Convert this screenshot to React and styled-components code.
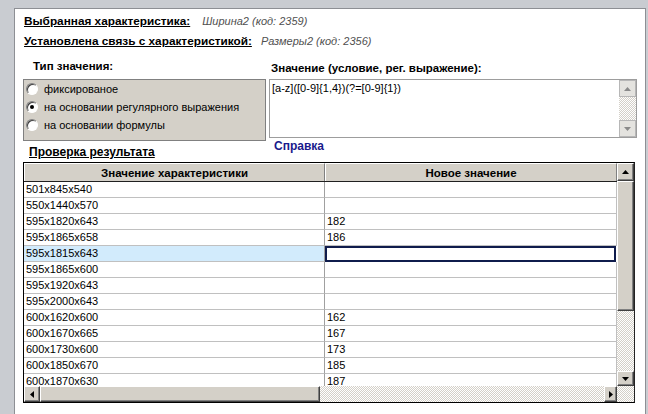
import React from "react";
import styled, { createGlobalStyle } from "styled-components";

const GlobalStyle = createGlobalStyle`
  html, body {
    margin: 0;
    padding: 0;
    background: #c9ccd1;
    overflow: hidden;
  }
  body {
    font-family: "Liberation Sans", Arial, sans-serif;
    font-size: 11px;
    color: #000;
  }
`;

const rows = [
  ["501x845x540", ""],
  ["550x1440x570", ""],
  ["595x1820x643", "182"],
  ["595x1865x658", "186"],
  ["595x1815x643", "", true],
  ["595x1865x600", ""],
  ["595x1920x643", ""],
  ["595x2000x643", ""],
  ["600x1620x600", "162"],
  ["600x1670x665", "167"],
  ["600x1730x600", "173"],
  ["600x1850x670", "185"],
  ["600x1870x630", "187"],
];

const App = () => {
  return (
    <Page>
      <GlobalStyle />
      <Panel>
        <InfoLine>
          <Caption $gap={12}>Выбранная характеристика:</Caption>
          <Muted>Ширина2 (код: 2359)</Muted>
        </InfoLine>
        <InfoLine>
          <Caption $gap={9}>Установлена связь с характеристикой:</Caption>
          <Muted>Размеры2 (код: 2356)</Muted>
        </InfoLine>

        <Columns>
          <LeftCol>
            <GroupTitle>Тип значения:</GroupTitle>
            <RadioBox>
              <RadioRow>
                <Radio />
                фиксированое
              </RadioRow>
              <RadioRow>
                <Radio $checked />
                на основании регулярного выражения
              </RadioRow>
              <RadioRow>
                <Radio />
                на основании формулы
              </RadioRow>
            </RadioBox>
            <CheckTitle>Проверка результата</CheckTitle>
          </LeftCol>
          <RightCol>
            <ValueTitle>Значение (условие, рег. выражение):</ValueTitle>
            <Memo>
              <MemoText>[a-z]([0-9]{"{"}1,4{"}"})(?=[0-9]{"{"}1{"}"})</MemoText>
              <MemoScroll>
                <FlatButton>
                  <Arrow dir="up" color="#8a8a8a" />
                </FlatButton>
                <Track />
                <FlatButton>
                  <Arrow dir="down" color="#8a8a8a" />
                </FlatButton>
              </MemoScroll>
            </Memo>
            <HelpLink>Справка</HelpLink>
          </RightCol>
        </Columns>

        <Grid>
          <GridBody>
            <TableArea>
              <HeaderRow>
                <HeadCell $w={301}>Значение характеристики</HeadCell>
                <HeadCell $w={292}>Новое значение</HeadCell>
              </HeaderRow>
              {rows.map(([a, b, sel]) => (
                <Row key={a}>
                  <Cell $w={301} $selected={sel}>{a}</Cell>
                  {sel ? <EditCell /> : <Cell $w={292} $last>{b}</Cell>}
                </Row>
              ))}
            </TableArea>
            <VScroll>
              <ClassicButton $h={18}>
                <Arrow dir="up" />
              </ClassicButton>
              <Thumb $h={130} />
              <Track />
              <ClassicButton $h={15}>
                <Arrow dir="down" />
              </ClassicButton>
            </VScroll>
          </GridBody>
          <HScrollRow>
            <ClassicButton $w={16}>
              <Arrow dir="left" />
            </ClassicButton>
            <Thumb $w={280} />
            <Track />
            <ClassicButton $w={13}>
              <Arrow dir="right" />
            </ClassicButton>
            <Corner />
          </HScrollRow>
        </Grid>
      </Panel>
    </Page>
  );
};

export default App;

const Arrow = ({ dir, color = "#000" }) => {
  const pts = {
    up: "0,4 7,4 3.5,0",
    down: "0,0 7,0 3.5,4",
    left: "4,0 4,7 0,3.5",
    right: "0,0 0,7 4,3.5",
  }[dir];
  const vertical = dir === "up" || dir === "down";
  return (
    <svg width={vertical ? 7 : 4} height={vertical ? 4 : 7} viewBox={vertical ? "0 0 7 4" : "0 0 4 7"}>
      <polygon points={pts} fill={color} />
    </svg>
  );
};

const Page = styled.div`
  padding: 8px 0 0 14px;
  height: 414px;
  box-sizing: border-box;
`;

const Panel = styled.div`
  width: 632px;
  height: 420px;
  box-sizing: border-box;
  background: #fff;
  border-top: 1px solid #8d8f94;
  border-left: 1px solid #8d8f94;
  border-right: 1px solid #8d8f94;
  padding: 2px 0 0 9px;
`;

const InfoLine = styled.div`
  display: flex;
  align-items: center;
  height: 20px;
`;

const Caption = styled.span`
  font-weight: bold;
  font-size: 11.8px;
  text-decoration: underline;
  margin-right: ${(p) => p.$gap}px;
`;

const Muted = styled.span`
  font-style: italic;
  color: #505050;
  font-size: 11px;
`;

const Columns = styled.div`
  display: flex;
  margin-top: 8px;
  margin-left: -1px;
`;

const LeftCol = styled.div`
  width: 243px;
  display: flex;
  flex-direction: column;
`;

const RightCol = styled.div`
  width: 368px;
  margin-left: 3px;
  margin-top: 2px;
  display: flex;
  flex-direction: column;
`;

const GroupTitle = styled.div`
  font-weight: bold;
  font-size: 11.5px;
  line-height: 14px;
  margin: 0 0 6px 10px;
`;

const ValueTitle = styled.div`
  font-weight: bold;
  font-size: 11.5px;
  line-height: 14px;
  margin: 0 0 4px 2px;
`;

const RadioBox = styled.div`
  background: #d4d0c8;
  border: 1px solid #808080;
  height: 62px;
  box-sizing: border-box;
`;

const RadioRow = styled.div`
  display: flex;
  align-items: center;
  height: 18px;
  font-size: 11px;
  gap: 3px;
  padding-left: 2px;
`;

const Radio = styled.span`
  width: 12px;
  height: 12px;
  border-radius: 50%;
  box-sizing: border-box;
  background: #fff;
  border: 1px solid;
  border-color: #808080 #fff #fff #808080;
  box-shadow: inset 1px 1px 0 #404040;
  position: relative;
  margin-right: 3px;

  &::after {
    content: "";
    display: ${(p) => (p.$checked ? "block" : "none")};
    position: absolute;
    left: 3px;
    top: 3px;
    width: 4px;
    height: 4px;
    border-radius: 50%;
    background: #000;
  }
`;

const CheckTitle = styled.div`
  font-weight: bold;
  font-size: 12px;
  text-decoration: underline;
  line-height: 14px;
  margin: 4px 0 0 6px;
`;

const Memo = styled.div`
  height: 59px;
  box-sizing: border-box;
  border: 1px solid #9d9d9d;
  display: flex;
  background: #fff;
`;

const MemoText = styled.div`
  flex: 1;
  padding: 2px 0 0 2px;
  font-size: 11px;
`;

const MemoScroll = styled.div`
  width: 17px;
  display: flex;
  flex-direction: column;
`;

const FlatButton = styled.div`
  height: 17px;
  background: #e4e3df;
  border: 1px solid #b7b7b7;
  box-sizing: border-box;
  display: flex;
  align-items: center;
  justify-content: center;
`;

const Track = styled.div`
  flex: 1;
  background: repeating-conic-gradient(#d4d0c8 0 25%, #fff 0 50%) 0 0 / 2px 2px;
`;

const HelpLink = styled.div`
  color: #1a1a8c;
  font-weight: bold;
  font-size: 12px;
  line-height: 14px;
  margin: 1px 0 0 5px;
`;

const Grid = styled.div`
  margin: 3px 0 0 -1px;
  width: 612px;
  height: 241px;
  box-sizing: border-box;
  border: 1px solid #000;
  border-right-color: #222;
  display: flex;
  flex-direction: column;
`;

const GridBody = styled.div`
  display: flex;
  height: 223px;
`;

const TableArea = styled.div`
  width: 593px;
  overflow: hidden;
`;

const HeaderRow = styled.div`
  display: flex;
  height: 19px;
  border-bottom: 1px solid #202020;
  box-sizing: border-box;
`;

const HeadCell = styled.div`
  width: ${(p) => p.$w}px;
  box-sizing: border-box;
  background: #d4d0c8;
  border-top: 1px solid #fff;
  border-left: 1px solid #fff;
  border-right: 1px solid #808080;
  font-weight: bold;
  font-size: 11.5px;
  display: flex;
  align-items: center;
  justify-content: center;
`;

const Row = styled.div`
  display: flex;
  height: 16px;
`;

const Cell = styled.div`
  width: ${(p) => p.$w}px;
  box-sizing: border-box;
  border-bottom: 1px solid #c0c0c0;
  border-right: 1px solid ${(p) => (p.$last ? "#c0c0c0" : "#a0a0a0")};
  background: ${(p) => (p.$selected ? "#d2ebfc" : "#fff")};
  padding-left: 2px;
  font-size: 11px;
  line-height: 15px;
  white-space: nowrap;
`;

const EditCell = styled.div`
  width: 291px;
  box-sizing: border-box;
  border: 2px solid #0f1c4c;
  background: #fff;
`;

const VScroll = styled.div`
  width: 17px;
  display: flex;
  flex-direction: column;
`;

const ClassicButton = styled.div`
  ${(p) => (p.$h ? `height: ${p.$h}px;` : "")}
  ${(p) => (p.$w ? `width: ${p.$w}px;` : "")}
  flex-shrink: 0;
  box-sizing: border-box;
  background: #d4d0c8;
  border: 1px solid;
  border-color: #fff #404040 #404040 #fff;
  box-shadow: inset -1px -1px 0 #808080;
  display: flex;
  align-items: center;
  justify-content: center;
`;

const Thumb = styled.div`
  ${(p) => (p.$h ? `height: ${p.$h}px;` : "")}
  ${(p) => (p.$w ? `width: ${p.$w}px;` : "")}
  flex-shrink: 0;
  box-sizing: border-box;
  background: #d4d0c8;
  border: 1px solid;
  border-color: #fff #404040 #404040 #fff;
  box-shadow: inset -1px -1px 0 #808080;
`;

const HScrollRow = styled.div`
  display: flex;
  height: 16px;
`;

const Corner = styled.div`
  width: 17px;
  background: repeating-conic-gradient(#d4d0c8 0 25%, #fff 0 50%) 0 0 / 2px 2px;
`;
